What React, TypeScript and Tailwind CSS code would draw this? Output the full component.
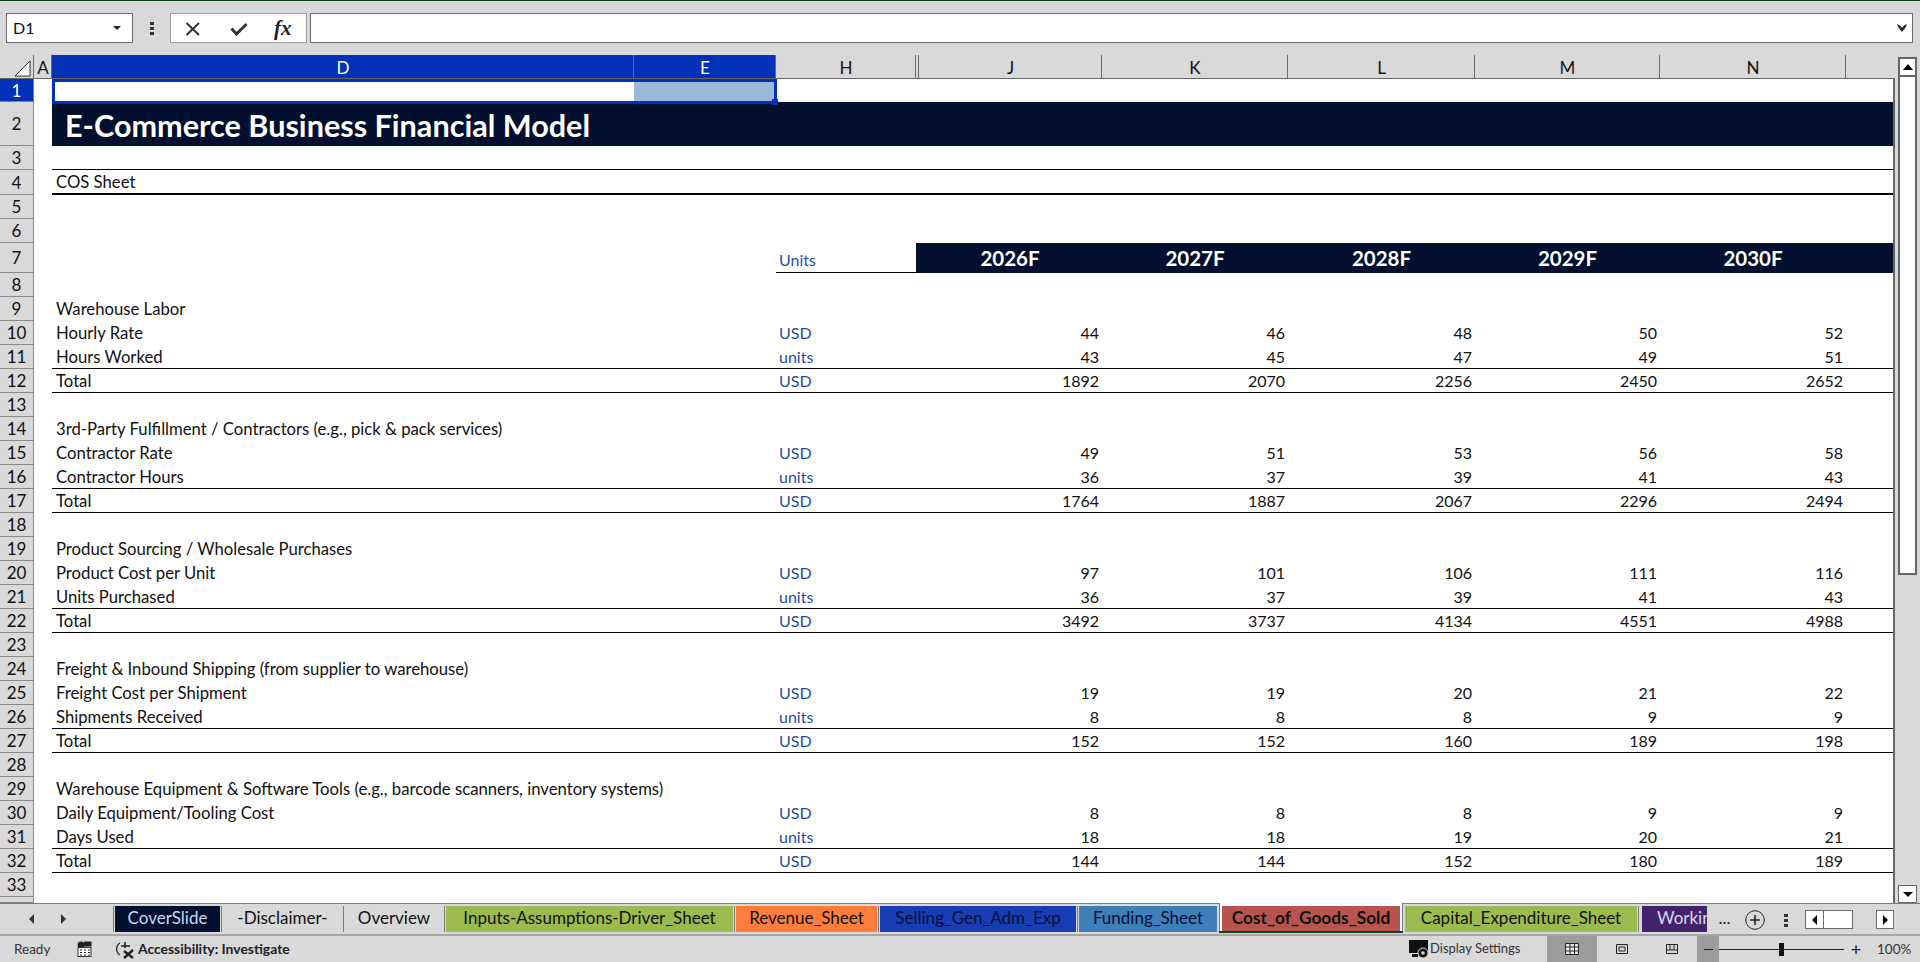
import { ReactNode } from 'react';

type RowDef = { n: number; label?: string; unit?: string; vals?: (number | string)[]; line?: boolean };

const cols = [
  { name: 'J', w: 'w-[184px]' },
  { name: 'K', w: 'w-[186px]' },
  { name: 'L', w: 'w-[187px]' },
  { name: 'M', w: 'w-[185px]' },
  { name: 'N', w: 'w-[186px]' },
];

const rows: RowDef[] = [
  { n: 8 },
  { n: 9, label: 'Warehouse Labor' },
  { n: 10, label: 'Hourly Rate', unit: 'USD', vals: [44, 46, 48, 50, 52] },
  { n: 11, label: 'Hours Worked', unit: 'units', vals: [43, 45, 47, 49, 51], line: true },
  { n: 12, label: 'Total', unit: 'USD', vals: [1892, 2070, 2256, 2450, 2652], line: true },
  { n: 13 },
  { n: 14, label: '3rd-Party Fulfillment / Contractors (e.g., pick & pack services)' },
  { n: 15, label: 'Contractor Rate', unit: 'USD', vals: [49, 51, 53, 56, 58] },
  { n: 16, label: 'Contractor Hours', unit: 'units', vals: [36, 37, 39, 41, 43], line: true },
  { n: 17, label: 'Total', unit: 'USD', vals: [1764, 1887, 2067, 2296, 2494], line: true },
  { n: 18 },
  { n: 19, label: 'Product Sourcing / Wholesale Purchases' },
  { n: 20, label: 'Product Cost per Unit', unit: 'USD', vals: [97, 101, 106, 111, 116] },
  { n: 21, label: 'Units Purchased', unit: 'units', vals: [36, 37, 39, 41, 43], line: true },
  { n: 22, label: 'Total', unit: 'USD', vals: [3492, 3737, 4134, 4551, 4988], line: true },
  { n: 23 },
  { n: 24, label: 'Freight & Inbound Shipping (from supplier to warehouse)' },
  { n: 25, label: 'Freight Cost per Shipment', unit: 'USD', vals: [19, 19, 20, 21, 22] },
  { n: 26, label: 'Shipments Received', unit: 'units', vals: [8, 8, 8, 9, 9], line: true },
  { n: 27, label: 'Total', unit: 'USD', vals: [152, 152, 160, 189, 198], line: true },
  { n: 28 },
  { n: 29, label: 'Warehouse Equipment & Software Tools (e.g., barcode scanners, inventory systems)' },
  { n: 30, label: 'Daily Equipment/Tooling Cost', unit: 'USD', vals: [8, 8, 8, 9, 9] },
  { n: 31, label: 'Days Used', unit: 'units', vals: [18, 18, 19, 20, 21], line: true },
  { n: 32, label: 'Total', unit: 'USD', vals: [144, 144, 152, 180, 189], line: true },
  { n: 33 },
];

const tabs = [
  { name: 'CoverSlide', w: 'w-[105px]', cls: 'bg-[#030f2f] text-[#c5d9f1]' },
  { name: '-Disclaimer-', w: 'w-[119px]', cls: 'text-[#111]' },
  { name: 'Overview', w: 'w-[98px]', cls: 'text-[#111]' },
  { name: 'Inputs-Assumptions-Driver_Sheet', w: 'w-[287px]', cls: 'bg-[#9bbb50] text-[#111]' },
  { name: 'Revenue_Sheet', w: 'w-[141px]', cls: 'bg-[#ff7d3c] text-[#111]' },
  { name: 'Selling_Gen_Adm_Exp', w: 'w-[196px]', cls: 'bg-[#183db5] text-[#07103a]' },
  { name: 'Funding_Sheet', w: 'w-[138px]', cls: 'bg-[#3f7fb8] text-[#07103a]' },
];

function RowHead({ n, h, active }: { n: number | string; h: string; active?: boolean }) {
  return (
    <div
      className={`w-[34px] shrink-0 pt-[1px] flex items-center justify-center border-r border-b text-[17px] ${h} ${
        active ? 'bg-[#0230b7] text-white border-[#7d7d7d]' : 'bg-[#d9d9d9] text-[#111] border-[#8a8a8a]'
      }`}
    >
      {n}
    </div>
  );
}

function ColHead({ name, w, active }: { name: string; w: string; active?: boolean }) {
  return (
    <div
      className={`${w} shrink-0 h-full pt-[3px] pl-[1px] flex items-center justify-center text-[17px] border-r ${
        active ? 'bg-[#0230b7] text-white border-[#5a6aa0]' : 'text-[#111] border-[#6b6b6b]'
      }`}
    >
      {name}
    </div>
  );
}

function DataRow({ row }: { row: RowDef }) {
  return (
    <div className="flex h-[24px]">
      <RowHead n={row.n} h="h-[24px]" />
      <div className="w-[18px] shrink-0" />
      <div className={`flex flex-1 text-[16px] leading-[24px] text-[#111] ${row.line ? 'border-b border-black' : ''}`}>
        <div className="w-[724px] shrink-0 pl-[4px] text-[16.7px] whitespace-nowrap">{row.label}</div>
        <div className="w-[142px] shrink-0 pl-[3px] text-[#1f4ea0]">{row.unit}</div>
        {cols.map((c, i) => (
          <div key={c.name} className={`${c.w} shrink-0 pr-[3px] text-right`}>
            {row.vals?.[i]}
          </div>
        ))}
      </div>
    </div>
  );
}

function Sep() {
  return <div className="w-px h-[26px] mx-[1px] mt-[2px] shrink-0 bg-[#7a7a7a]" />;
}

function ViewBtn({ active, children }: { active?: boolean; children: ReactNode }) {
  return (
    <div className={`w-[50px] h-full flex items-center justify-center ${active ? 'bg-[#9c9c9c]' : ''}`}>{children}</div>
  );
}

export default function App() {
  return (
    <div className="w-[1920px] h-[962px] overflow-hidden flex flex-col bg-[#d9d9d9] font-['Lato',sans-serif]">
      <div className="h-px bg-[#0e4020] shrink-0" />

      {/* formula bar */}
      <div className="h-[54px] shrink-0 flex items-start pt-[12px]">
        <div className="ml-[6px] w-[127px] h-[30px] bg-white border border-[#6b6b6b] flex items-center justify-between pl-[6px] pr-[11px] text-[16px] text-[#111]">
          D1
          <div className="w-0 h-0 border-x-[4px] border-x-transparent border-t-[4px] border-t-[#222]" />
        </div>
        <div className="w-[37px] h-[30px] flex flex-col items-center justify-center gap-[2px]">
          <div className="w-[4px] h-[3px] bg-[#333]" />
          <div className="w-[4px] h-[3px] bg-[#333]" />
          <div className="w-[4px] h-[3px] bg-[#333]" />
        </div>
        <div className="w-[137px] h-[30px] bg-white border border-[#a0a0a0] flex items-center">
          <div className="w-[45px] pl-[14px] pt-[1px]">
            <svg width="16" height="14" viewBox="0 0 16 14" fill="none" stroke="#333" strokeWidth="2">
              <path d="M1.5 1 L14 13 M14 1 L1.5 13" />
            </svg>
          </div>
          <div className="w-[45px] pl-[14px] pt-[1px]">
            <svg width="18" height="14" viewBox="0 0 18 14" fill="none" stroke="#333" strokeWidth="3">
              <path d="M1.5 6.5 L6.5 12 L16.5 2" />
            </svg>
          </div>
          <div className="pl-[13px] font-['Liberation_Serif',serif] italic font-bold text-[21px] leading-none text-[#222]">fx</div>
        </div>
        <div className="ml-[3px] w-[1603px] h-[30px] bg-white border border-[#6b6b6b] flex items-center justify-end pr-[5px]">
          <svg width="10" height="8" viewBox="0 0 10 8" fill="#222">
            <path d="M0 0 L3 1.5 L5 4 L7 1.5 L10 0 L8.5 3.5 L5 8 L1.5 3.5 Z" />
          </svg>
        </div>
      </div>

      {/* column headers */}
      <div className="h-[23px] shrink-0 flex items-center">
        <div className="w-[34px] h-full shrink-0 border-r border-[#6b6b6b] flex items-end justify-end pb-[1px] pr-[2px]">
          <svg width="17" height="17" viewBox="0 0 18 18" fill="#fff" stroke="#222">
            <path d="M17 1 L17 17 L1 17 Z" />
          </svg>
        </div>
        <ColHead name="A" w="w-[18px]" />
        <ColHead name="D" w="w-[582px]" active />
        <ColHead name="E" w="w-[142px]" active />
        <div className="w-[140px] h-full pt-[3px] pl-[1px] shrink-0 flex items-center justify-center text-[17px] text-[#111] border-r border-[#6b6b6b]">H</div>
        <div className="w-[3px] h-full shrink-0 border-r border-[#6b6b6b]" />
        {cols.map(c => (
          <ColHead key={c.name} name={c.name} w={c.name === 'J' ? 'w-[183px]' : c.w} />
        ))}
      </div>

      {/* sheet + vertical scrollbar */}
      <div className="flex-1 min-h-0 flex">
        <div className="relative w-[1895px] shrink-0 bg-white border-t border-r-2 border-[#666] overflow-hidden">
          <div className="flex h-[23px]">
            <RowHead n={1} h="h-[23px]" active />
            <div className="w-[18px] shrink-0" />
            <div className="w-[582px] shrink-0" />
            <div className="w-[142px] shrink-0 bg-[#9bb8db]" />
          </div>
          <div className="flex h-[44px]">
            <RowHead n={2} h="h-[44px]" />
            <div className="w-[18px] shrink-0" />
            <div className="flex-1 bg-[#030f2f] pl-[13px] pt-[2px] text-[30.6px] leading-[44px] font-bold text-white whitespace-nowrap">
              E-Commerce Business Financial Model
            </div>
          </div>
          <div className="flex h-[24px]">
            <RowHead n={3} h="h-[24px]" />
            <div className="w-[18px] shrink-0" />
            <div className="flex-1 border-b border-black" />
          </div>
          <div className="flex h-[25px]">
            <RowHead n={4} h="h-[25px]" />
            <div className="w-[18px] shrink-0" />
            <div className="flex-1 border-b-2 border-black pl-[4px] text-[16.7px] leading-[25px] text-[#111]">COS Sheet</div>
          </div>
          <div className="flex h-[24px]">
            <RowHead n={5} h="h-[24px]" />
          </div>
          <div className="flex h-[24px]">
            <RowHead n={6} h="h-[24px]" />
          </div>
          <div className="flex h-[30px]">
            <RowHead n={7} h="h-[30px]" />
            <div className="w-[742px] shrink-0" />
            <div className="w-[140px] shrink-0 border-b border-black pl-[3px] pt-[5px] text-[16px] leading-[24px] text-[#1f4ea0]">Units</div>
            <div className="flex flex-1 bg-[#030f2f] pl-[2px] pt-[1px] text-white text-[20.5px] font-bold leading-[28px]">
              {cols.map((c, i) => (
                <div key={c.name} className={`${c.w} shrink-0 text-center`}>
                  {2026 + i}F
                </div>
              ))}
            </div>
          </div>
          {rows.map(r => (
            <DataRow key={r.n} row={r} />
          ))}
          <RowHead n="" h="h-[6px]" />

          {/* selection outline sits over rows 1 and 2 */}
          <div className="absolute left-[52px] top-0 w-[725px] h-[25px] border-[3px] border-[#0230b7]" />
          <div className="absolute left-[772px] top-[20px] w-[6px] h-[6px] bg-[#0230b7]" />
        </div>
        <div className="flex-1 flex flex-col pl-[3px] pr-[3px]">
          <div className="h-[20px] -mt-[21px] bg-white border-2 border-[#666] flex items-center justify-center">
            <div className="w-0 h-0 border-x-[5px] border-x-transparent border-b-[6px] border-b-black" />
          </div>
          <div className="h-[498px] bg-white border-2 border-t-0 border-[#666]" />
          <div className="flex-1" />
          <div className="h-[18px] bg-white border border-[#666] flex items-center justify-center">
            <div className="w-0 h-0 border-x-[5px] border-x-transparent border-t-[5px] border-t-black" />
          </div>
        </div>
      </div>

      {/* sheet tabs */}
      <div className="h-[33px] shrink-0 flex items-start border-t border-[#7a7a7a] border-b-2 border-b-[#a6a6a6] text-[17px] leading-[23px]">
        <div className="w-[112px] h-full flex items-center pl-[29px] gap-[27px] shrink-0">
          <div className="w-0 h-0 border-y-[5px] border-y-transparent border-r-[5px] border-r-[#333]" />
          <div className="w-0 h-0 border-y-[5px] border-y-transparent border-l-[5px] border-l-[#333]" />
        </div>
        <Sep />
        {tabs.map((t, i) => (
          <div key={t.name} className="flex items-start shrink-0">
            <div className={`${t.w} h-[26px] mt-[2px] text-center whitespace-nowrap ${t.cls}`}>{t.name}</div>
            {i < tabs.length - 1 && <Sep />}
          </div>
        ))}
        <div className="relative w-[184px] h-[30px] -mt-px ml-[2px] shrink-0 bg-white border-x border-[#7a7a7a] pt-[3px] px-[2px]">
          <div className="h-[25px] bg-[#b85450] text-center font-bold text-[17.3px] leading-[23px] text-[#111] whitespace-nowrap">Cost_of_Goods_Sold</div>
          <div className="absolute -left-px -right-px bottom-0 h-[2px] bg-[#0e4020]" />
        </div>
        <div className="w-[232px] h-[26px] mt-[2px] ml-[2px] shrink-0 bg-[#9bbb50] text-center text-[#111]">Capital_Expenditure_Sheet</div>
        <Sep />
        <div className="w-[65px] h-[26px] mt-[2px] ml-[2px] shrink-0 overflow-hidden bg-[#43246b] pl-[15px] whitespace-nowrap text-[#d5dcf5]">Working</div>
        <div className="w-[35px] shrink-0 text-center mt-[2px] text-[#222]">...</div>
        <div className="w-[20px] h-[20px] mt-[6px] ml-[3px] shrink-0">
          <svg width="20" height="20" viewBox="0 0 20 20" fill="none" stroke="#222">
            <circle cx="10" cy="10" r="9.3" />
            <path d="M10 5 V15 M5 10 H15" strokeWidth="1.6" />
          </svg>
        </div>
        <div className="w-[42px] h-[26px] shrink-0 mt-[3px] flex flex-col items-center justify-center gap-[2px]">
          <div className="w-[4px] h-[3px] bg-[#333]" />
          <div className="w-[4px] h-[3px] bg-[#333]" />
          <div className="w-[4px] h-[3px] bg-[#333]" />
        </div>
        <div className="w-[48px] h-[19px] mt-[6px] ml-[-2px] shrink-0 flex bg-white border border-[#6b6b6b]">
          <div className="w-[18px] border-r border-[#6b6b6b] flex items-center justify-center">
            <div className="w-0 h-0 border-y-[5px] border-y-transparent border-r-[5px] border-r-black" />
          </div>
        </div>
        <div className="w-[18px] h-[19px] mt-[6px] ml-[23px] shrink-0 bg-white border border-[#6b6b6b] flex items-center justify-center">
          <div className="w-0 h-0 border-y-[5px] border-y-transparent border-l-[5px] border-l-black" />
        </div>
      </div>

      {/* status bar */}
      <div className="h-[26px] shrink-0 flex items-center text-[13.5px] text-[#333]">
        <div className="w-[77px] pl-[14px] shrink-0">Ready</div>
        <svg width="15" height="16" viewBox="0 0 15 16" className="shrink-0">
          <circle cx="4" cy="4" r="3.4" fill="#222" />
          <rect x="7" y="0.5" width="7.5" height="5" fill="#222" />
          <rect x="1" y="6.5" width="13" height="9" fill="#fff" stroke="#333" />
          <path d="M3 9 h2 M7 9 h2 M11 9 h2 M3 11.5 h2 M7 11.5 h2 M11 11.5 h2 M3 14 h2 M7 14 h2 M11 14 h2" stroke="#222" />
        </svg>
        <svg width="21" height="19" viewBox="0 0 21 19" fill="none" stroke="#222" className="ml-[22px] shrink-0">
          <path d="M6 3 A7 7 0 0 0 6 15" strokeWidth="1.3" />
          <path d="M11 2 V8 M7 6 H16" strokeWidth="1.6" />
          <path d="M10 11 L19 18 M19 10 L10 18" strokeWidth="2.4" />
        </svg>
        <div className="ml-[3px] w-[1271px] shrink-0 font-bold text-[13.9px] text-[#222]">Accessibility: Investigate</div>
        <svg width="21" height="19" viewBox="0 0 21 19" className="shrink-0">
          <rect x="0" y="0" width="19" height="13" fill="#111" />
          <rect x="3" y="14" width="6" height="3" fill="#111" />
          <circle cx="14" cy="13" r="5" fill="#111" stroke="#d9d9d9" />
          <circle cx="14" cy="13" r="1.8" fill="#d9d9d9" />
        </svg>
        <div className="w-[117px] shrink-0 text-[13px] whitespace-nowrap">Display Settings</div>
        <div className="flex h-full items-center w-[150px] shrink-0">
          <ViewBtn active>
            <svg width="14" height="12" viewBox="0 0 14 12" fill="#e8e8e8" stroke="#222">
              <path d="M.5 .5 H13.5 V11.5 H.5 Z M.5 4 H13.5 M.5 8 H13.5 M5 .5 V11.5 M9.5 .5 V11.5" />
            </svg>
          </ViewBtn>
          <ViewBtn>
            <svg width="12" height="10" viewBox="0 0 12 10" fill="none" stroke="#222">
              <path d="M.5 .5 H11.5 V9.5 H.5 Z M3 3 H9 V7 H3 Z" />
            </svg>
          </ViewBtn>
          <ViewBtn>
            <svg width="12" height="10" viewBox="0 0 12 10" fill="none" stroke="#222">
              <path d="M.5 .5 H11.5 V9.5 H.5 Z" />
              <path d="M4 .5 V6 H8 V.5 M.5 6 H4 M8 6 H11.5" />
            </svg>
          </ViewBtn>
        </div>
        <div className="w-[22px] h-full shrink-0 bg-[#9c9c9c] flex items-center justify-center">
          <div className="w-[9px] h-px bg-[#222]" />
        </div>
        <div className="relative w-[125px] h-px shrink-0 bg-[#222]">
          <div className="absolute left-[60px] -top-[6px] w-[5px] h-[13px] bg-[#111]" />
        </div>
        <div className="w-[22px] shrink-0 text-center text-[18px] leading-none text-[#222] ml-[1px]">+</div>
        <div className="ml-[10px] text-[13.5px]">100%</div>
      </div>
    </div>
  );
}
